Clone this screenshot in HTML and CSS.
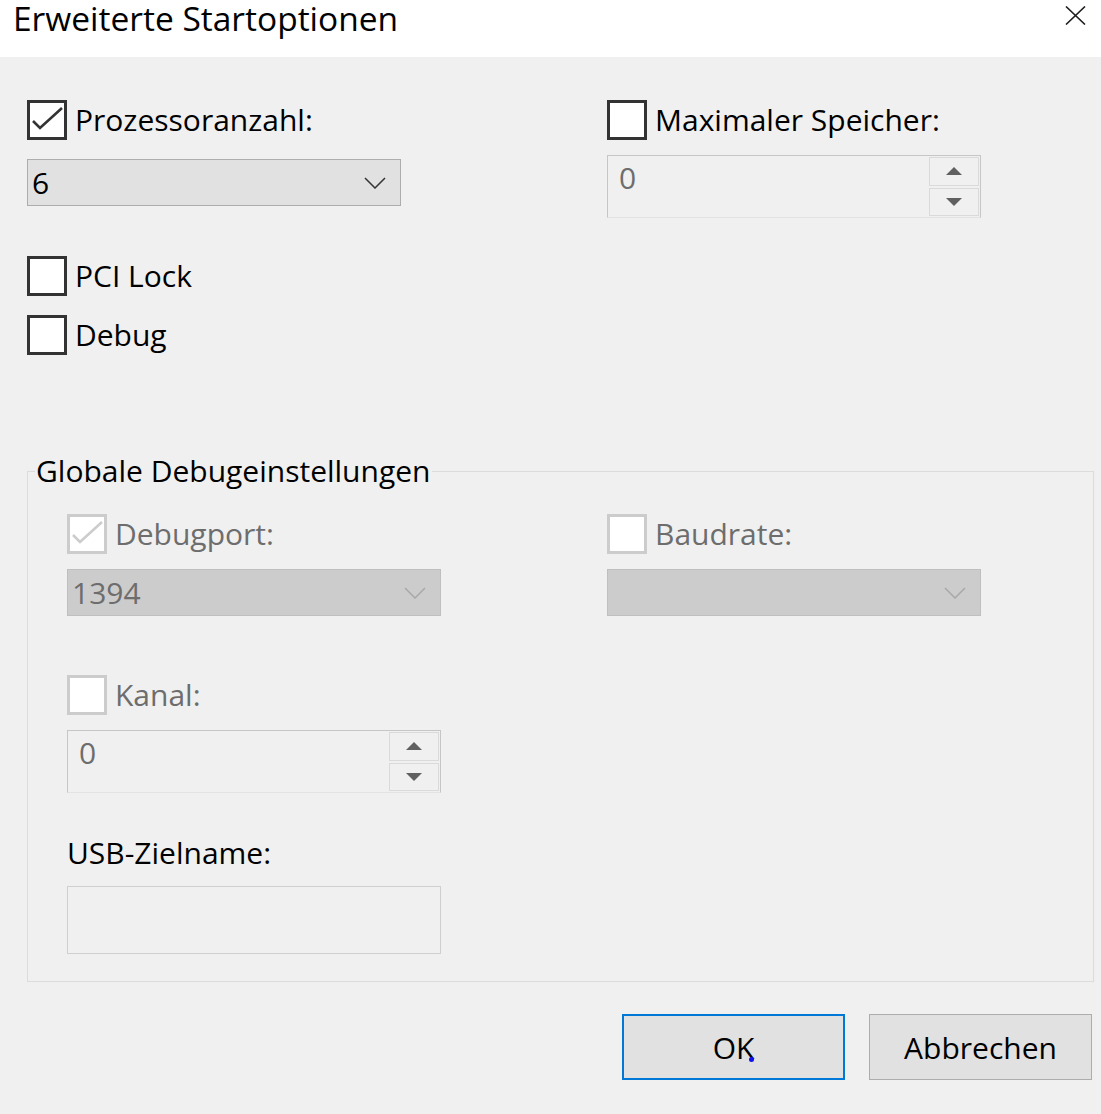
FILE: index.html
```html
<!DOCTYPE html>
<html lang="de">
<head>
    <meta charset="UTF-8">
    <meta name="viewport" content="width=device-width, initial-scale=1.0">
    <title>Erweiterte Startoptionen</title>
    <link rel="stylesheet" href="styles.css">
</head>
<body>
    <div class="dialog">
        <div class="titlebar">
            <span class="title">Erweiterte Startoptionen</span>
            <span class="close" title="Schließen">
                <svg width="21" height="19" viewBox="0 0 21 19">
                    <path d="M1 0.5 L20 18.5 M20 0.5 L1 18.5" stroke="#1e1e1e" stroke-width="1.6" fill="none"/>
                </svg>
            </span>
        </div>

        <div class="content">
            <div class="columns top">
                <div class="col">
                    <label class="check">
                        <span class="box">
                            <svg class="tick" width="34" height="34" viewBox="0 0 34 34">
                                <polyline points="3,18 10,25 32,5" fill="none" stroke="#333" stroke-width="2.6"/>
                            </svg>
                        </span>
                        Prozessoranzahl:
                    </label>
                    <div class="combo">
                        <span>6</span>
                        <svg class="chevron" width="22" height="12" viewBox="0 0 22 12">
                            <polyline points="1,1 11,11 21,1" fill="none" stroke="#333" stroke-width="1.5"/>
                        </svg>
                    </div>
                    <label class="check spaced"><span class="box"></span>PCI Lock</label>
                    <label class="check next"><span class="box"></span>Debug</label>
                </div>
                <div class="col">
                    <label class="check"><span class="box"></span>Maximaler Speicher:</label>
                    <div class="spin">
                        <span class="value">0</span>
                        <span class="spin-buttons">
                            <span class="spin-btn">
                                <svg width="16" height="8" viewBox="0 0 16 8"><polygon points="0,8 8,0 16,8" fill="#606060"/></svg>
                            </span>
                            <span class="spin-btn">
                                <svg width="16" height="8" viewBox="0 0 16 8"><polygon points="0,0 16,0 8,8" fill="#606060"/></svg>
                            </span>
                        </span>
                    </div>
                </div>
            </div>

            <fieldset class="group">
                <legend>Globale Debugeinstellungen</legend>
                <div class="columns">
                    <div class="col">
                        <label class="check disabled">
                            <span class="box">
                                <svg class="tick" width="34" height="34" viewBox="0 0 34 34">
                                    <polyline points="3,18 10,25 32,5" fill="none" stroke="#cccccc" stroke-width="2.6"/>
                                </svg>
                            </span>
                            Debugport:
                        </label>
                        <div class="combo disabled">
                            <span>1394</span>
                            <svg class="chevron" width="22" height="12" viewBox="0 0 22 12">
                                <polyline points="1,1 11,11 21,1" fill="none" stroke="#a8a8a8" stroke-width="1.5"/>
                            </svg>
                        </div>

                        <label class="check disabled channel"><span class="box"></span>Kanal:</label>
                        <div class="spin">
                            <span class="value">0</span>
                            <span class="spin-buttons">
                                <span class="spin-btn">
                                    <svg width="16" height="8" viewBox="0 0 16 8"><polygon points="0,8 8,0 16,8" fill="#606060"/></svg>
                                </span>
                                <span class="spin-btn">
                                    <svg width="16" height="8" viewBox="0 0 16 8"><polygon points="0,0 16,0 8,8" fill="#606060"/></svg>
                                </span>
                            </span>
                        </div>

                        <div class="field-label">USB-Zielname:</div>
                        <div class="textbox"></div>
                    </div>
                    <div class="col">
                        <label class="check disabled"><span class="box"></span>Baudrate:</label>
                        <div class="combo disabled">
                            <span></span>
                            <svg class="chevron" width="22" height="12" viewBox="0 0 22 12">
                                <polyline points="1,1 11,11 21,1" fill="none" stroke="#a8a8a8" stroke-width="1.5"/>
                            </svg>
                        </div>
                    </div>
                </div>
            </fieldset>

            <div class="buttons">
                <button class="btn default">OK</button>
                <button class="btn">Abbrechen</button>
            </div>
        </div>
    </div>
</body>
</html>
```

FILE: styles.css
```css
body {
    margin: 0;
    font-family: "Open Sans", "Noto Sans", sans-serif;
    font-size: 30px;
    color: #000;
    background-color: #f0f0f0;
}

.dialog {
    width: 1101px;
    height: 1114px;
    background: #f0f0f0;
}

/* title bar */

.titlebar {
    height: 57px;
    background: #fff;
    display: flex;
    justify-content: space-between;
    align-items: flex-start;
}

.title {
    font-size: 33.5px;
    line-height: 36px;
    padding-left: 13px;
}

.close {
    margin-top: 6px;
    margin-right: 15px;
}

.close svg {
    display: block;
}

/* main area */

.content {
    padding: 43px 7px 0 27px;
}

.columns {
    display: grid;
    grid-template-columns: 580px 1fr;
}

.col {
    display: flex;
    flex-direction: column;
    align-items: flex-start;
}

.check {
    display: flex;
    align-items: center;
    gap: 8px;
    height: 40px;
    line-height: 40px;
}

.check .box {
    width: 40px;
    height: 40px;
    box-sizing: border-box;
    border: 3px solid #333;
    background: #fff;
    display: flex;
    align-items: center;
    justify-content: center;
}

.check.disabled {
    color: #6d6d6d;
}

.check.disabled .box {
    border-color: #cccccc;
}

.tick {
    display: block;
}

.check.spaced {
    margin-top: 50px;
}

.check.next {
    margin-top: 19px;
}

/* drop-down lists */

.combo {
    width: 374px;
    height: 47px;
    box-sizing: border-box;
    margin-top: 19px;
    padding: 0 14px 0 4px;
    background: #e1e1e1;
    border: 1px solid #adadad;
    display: flex;
    align-items: center;
    justify-content: space-between;
}

.combo.disabled {
    background: #cccccc;
    border-color: #bfbfbf;
    color: #6d6d6d;
    margin-top: 15px;
}

/* number fields with arrows */

.spin {
    width: 374px;
    height: 63px;
    box-sizing: border-box;
    margin-top: 15px;
    padding: 1px;
    border: 1px solid #c6c6c6;
    border-bottom-color: #e3e3e3;
    display: flex;
    color: #6d6d6d;
}

.spin .value {
    flex: 1;
    padding: 1px 0 0 10px;
    line-height: 40px;
}

.spin-buttons {
    width: 50px;
    display: flex;
    flex-direction: column;
    gap: 2px;
}

.spin-btn {
    flex: 1;
    border: 1px solid #dadada;
    display: flex;
    align-items: center;
    justify-content: center;
}

.spin-btn svg {
    display: block;
}

/* debug group */

.group {
    margin: 98px 0 0;
    padding: 25px 0 27px 0;
    border: 1px solid #dcdcdc;
    min-width: 0;
}

.group legend {
    margin-left: 7px;
    padding: 0 2px 0 1px;
    line-height: 36px;
}

.group .columns {
    grid-template-columns: 540px 1fr;
    padding-left: 39px;
}

.check.channel {
    margin-top: 59px;
}

.field-label {
    margin-top: 40px;
    height: 40px;
    line-height: 40px;
}

.textbox {
    width: 374px;
    height: 68px;
    box-sizing: border-box;
    margin-top: 13px;
    border: 1px solid #cfcfcf;
}

/* dialog buttons */

.buttons {
    display: flex;
    justify-content: flex-end;
    gap: 24px;
    margin-top: 32px;
    margin-right: 2px;
}

.btn {
    width: 223px;
    height: 66px;
    font-family: inherit;
    font-size: 30px;
    color: #000;
    background: #e1e1e1;
    border: 1px solid #adadad;
    padding: 0;
    position: relative;
}

.btn.default {
    border: 2px solid #0078d7;
}

/* small blue mark left under the OK caption */
.btn.default::after {
    content: "";
    position: absolute;
    left: 125px;
    top: 41px;
    width: 5px;
    height: 5px;
    border-radius: 50%;
    background: #1010f0;
}
```
